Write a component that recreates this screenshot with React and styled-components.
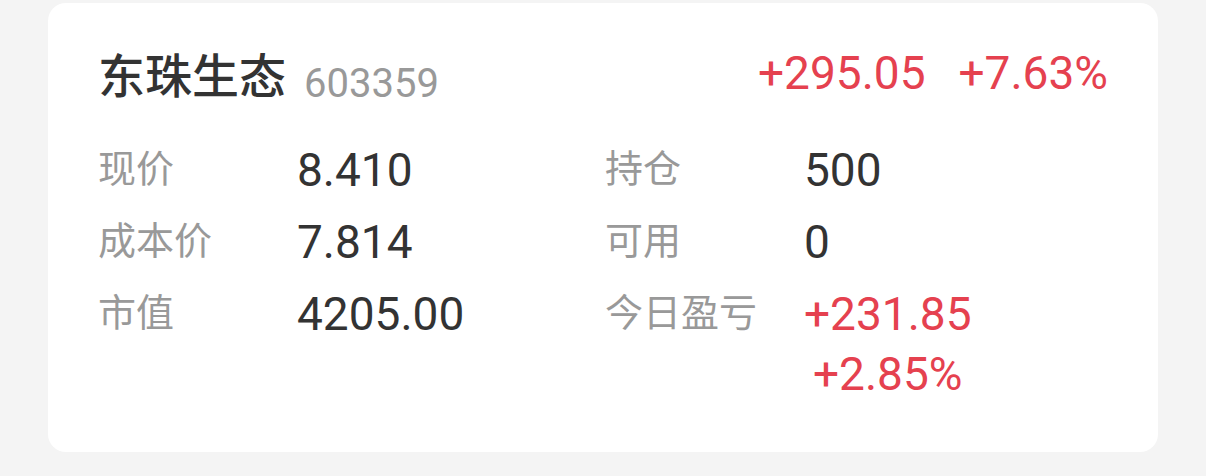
import React from "react";
import styled, { createGlobalStyle } from "styled-components";

const Global = createGlobalStyle`
  html, body { margin: 0; padding: 0; }
  body {
    background: #f4f4f4;
    font-family: Roboto, "Noto Sans CJK SC", sans-serif;
  }
`;

const Page = styled.div`
  width: 1206px;
  height: 476px;
  padding: 3px 48px 0 48px;
  box-sizing: border-box;
`;

const Card = styled.div`
  background: #ffffff;
  border-radius: 18px;
  height: 449px;
  box-sizing: border-box;
  padding: 40px 50px 0 50px;
`;

const Header = styled.div`
  display: flex;
  justify-content: space-between;
  align-items: center;
  height: 60px;
  margin-bottom: 37px;
`;

const TitleGroup = styled.div`
  display: flex;
  align-items: flex-end;
  gap: 18px;
  height: 60px;
`;

const Name = styled.span`
  font-family: "Noto Sans CJK SC", sans-serif;
  font-size: 47px;
  font-weight: 500;
  line-height: 60px;
  color: #333333;
`;

const Code = styled.span`
  font-family: Roboto, sans-serif;
  font-size: 40px;
  line-height: 38px;
  color: #999999;
`;

const Change = styled.div`
  display: flex;
  gap: 33px;
  font-family: Roboto, sans-serif;
  font-size: 46px;
  line-height: 60px;
  color: #e5414f;
`;

const Grid = styled.div`
  display: grid;
  grid-template-columns: 507px 503px;
  row-gap: 12px;
`;

const Cell = styled.div`
  display: flex;
  align-items: flex-start;
`;

const Label = styled.span`
  width: 199px;
  flex-shrink: 0;
  font-family: "Noto Sans CJK SC", sans-serif;
  font-size: 38px;
  line-height: 52px;
  color: #999999;
`;

const Value = styled.div`
  display: inline-flex;
  flex-direction: column;
  align-items: center;
  font-family: Roboto, sans-serif;
  font-size: 46px;
  line-height: 60px;
  color: ${(p) => (p.$up ? "#e5414f" : "#333333")};
`;

const rows = [
  [{ label: "现价", value: ["8.410"] }, { label: "持仓", value: ["500"] }],
  [{ label: "成本价", value: ["7.814"] }, { label: "可用", value: ["0"] }],
  [
    { label: "市值", value: ["4205.00"] },
    { label: "今日盈亏", value: ["+231.85", "+2.85%"], up: true },
  ],
];

export default function App() {
  return (
    <>
      <Global />
      <Page>
        <Card>
          <Header>
            <TitleGroup>
              <Name>东珠生态</Name>
              <Code>603359</Code>
            </TitleGroup>
            <Change>
              <span>+295.05</span>
              <span>+7.63%</span>
            </Change>
          </Header>
          <Grid>
            {rows.flat().map((c) => (
              <Cell key={c.label}>
                <Label>{c.label}</Label>
                <Value $up={c.up}>
                  {c.value.map((v) => (
                    <span key={v}>{v}</span>
                  ))}
                </Value>
              </Cell>
            ))}
          </Grid>
        </Card>
      </Page>
    </>
  );
}
